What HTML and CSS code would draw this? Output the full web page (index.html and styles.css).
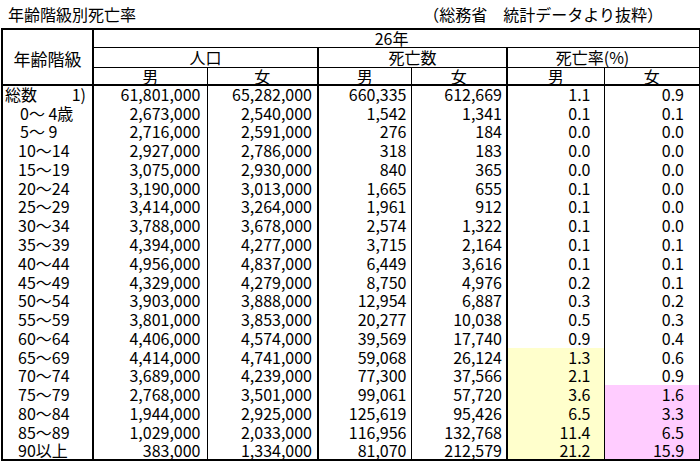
FILE: index.html
```html
<!DOCTYPE html>
<html lang="ja">
<head>
<meta charset="utf-8">
<title>年齢階級別死亡率</title>
<link rel="stylesheet" href="styles.css">
</head>
<body>
<div class="page">
  <div class="titlebar">
    <h1 class="title">年齢階級別死亡率</h1>
    <span class="source">（総務省　統計データより抜粋）</span>
  </div>
  <table class="stats">
    <colgroup>
      <col class="c-age"><col class="c-pm"><col class="c-pf"><col class="c-dm"><col class="c-df"><col class="c-rm"><col class="c-rf">
    </colgroup>
    <thead>
      <tr class="h1">
        <th rowspan="3" class="age-head">年齢階級</th>
        <th colspan="6" class="year gl">26年</th>
      </tr>
      <tr class="h2">
        <th colspan="2" class="gl">人口</th>
        <th colspan="2" class="gl">死亡数</th>
        <th colspan="2" class="gl rate-head">死亡率(%)</th>
      </tr>
      <tr class="h3">
        <th class="gl">男</th><th class="il">女</th>
        <th class="gl">男</th><th class="il">女</th>
        <th class="gl">男</th><th class="il">女</th>
      </tr>
    </thead>
    <tbody>
      <tr><th class="age"><div class="age-in"><span>総数</span><span class="note">1)</span></div></th><td class="gl pm">61,801,000</td><td class="il pf">65,282,000</td><td class="gl dm">660,335</td><td class="il df">612,669</td><td class="gl rm">1.1</td><td class="il rf">0.9</td></tr>
      <tr><th class="age one">0～ 4歳</th><td class="gl pm">2,673,000</td><td class="il pf">2,540,000</td><td class="gl dm">1,542</td><td class="il df">1,341</td><td class="gl rm">0.1</td><td class="il rf">0.1</td></tr>
      <tr><th class="age one">5～ 9</th><td class="gl pm">2,716,000</td><td class="il pf">2,591,000</td><td class="gl dm">276</td><td class="il df">184</td><td class="gl rm">0.0</td><td class="il rf">0.0</td></tr>
      <tr><th class="age">10～14</th><td class="gl pm">2,927,000</td><td class="il pf">2,786,000</td><td class="gl dm">318</td><td class="il df">183</td><td class="gl rm">0.0</td><td class="il rf">0.0</td></tr>
      <tr><th class="age">15～19</th><td class="gl pm">3,075,000</td><td class="il pf">2,930,000</td><td class="gl dm">840</td><td class="il df">365</td><td class="gl rm">0.0</td><td class="il rf">0.0</td></tr>
      <tr><th class="age">20～24</th><td class="gl pm">3,190,000</td><td class="il pf">3,013,000</td><td class="gl dm">1,665</td><td class="il df">655</td><td class="gl rm">0.1</td><td class="il rf">0.0</td></tr>
      <tr><th class="age">25～29</th><td class="gl pm">3,414,000</td><td class="il pf">3,264,000</td><td class="gl dm">1,961</td><td class="il df">912</td><td class="gl rm">0.1</td><td class="il rf">0.0</td></tr>
      <tr><th class="age">30～34</th><td class="gl pm">3,788,000</td><td class="il pf">3,678,000</td><td class="gl dm">2,574</td><td class="il df">1,322</td><td class="gl rm">0.1</td><td class="il rf">0.0</td></tr>
      <tr><th class="age">35～39</th><td class="gl pm">4,394,000</td><td class="il pf">4,277,000</td><td class="gl dm">3,715</td><td class="il df">2,164</td><td class="gl rm">0.1</td><td class="il rf">0.1</td></tr>
      <tr><th class="age">40～44</th><td class="gl pm">4,956,000</td><td class="il pf">4,837,000</td><td class="gl dm">6,449</td><td class="il df">3,616</td><td class="gl rm">0.1</td><td class="il rf">0.1</td></tr>
      <tr><th class="age">45～49</th><td class="gl pm">4,329,000</td><td class="il pf">4,279,000</td><td class="gl dm">8,750</td><td class="il df">4,976</td><td class="gl rm">0.2</td><td class="il rf">0.1</td></tr>
      <tr><th class="age">50～54</th><td class="gl pm">3,903,000</td><td class="il pf">3,888,000</td><td class="gl dm">12,954</td><td class="il df">6,887</td><td class="gl rm">0.3</td><td class="il rf">0.2</td></tr>
      <tr><th class="age">55～59</th><td class="gl pm">3,801,000</td><td class="il pf">3,853,000</td><td class="gl dm">20,277</td><td class="il df">10,038</td><td class="gl rm">0.5</td><td class="il rf">0.3</td></tr>
      <tr><th class="age">60～64</th><td class="gl pm">4,406,000</td><td class="il pf">4,574,000</td><td class="gl dm">39,569</td><td class="il df">17,740</td><td class="gl rm">0.9</td><td class="il rf">0.4</td></tr>
      <tr><th class="age">65～69</th><td class="gl pm">4,414,000</td><td class="il pf">4,741,000</td><td class="gl dm">59,068</td><td class="il df">26,124</td><td class="gl rm hl-y">1.3</td><td class="il rf">0.6</td></tr>
      <tr><th class="age">70～74</th><td class="gl pm">3,689,000</td><td class="il pf">4,239,000</td><td class="gl dm">77,300</td><td class="il df">37,566</td><td class="gl rm hl-y">2.1</td><td class="il rf">0.9</td></tr>
      <tr><th class="age">75～79</th><td class="gl pm">2,768,000</td><td class="il pf">3,501,000</td><td class="gl dm">99,061</td><td class="il df">57,720</td><td class="gl rm hl-y">3.6</td><td class="il rf hl-p">1.6</td></tr>
      <tr><th class="age">80～84</th><td class="gl pm">1,944,000</td><td class="il pf">2,925,000</td><td class="gl dm">125,619</td><td class="il df">95,426</td><td class="gl rm hl-y">6.5</td><td class="il rf hl-p">3.3</td></tr>
      <tr><th class="age">85～89</th><td class="gl pm">1,029,000</td><td class="il pf">2,033,000</td><td class="gl dm">116,956</td><td class="il df">132,768</td><td class="gl rm hl-y">11.4</td><td class="il rf hl-p">6.5</td></tr>
      <tr><th class="age">90以上</th><td class="gl pm">383,000</td><td class="il pf">1,334,000</td><td class="gl dm">81,070</td><td class="il df">212,579</td><td class="gl rm hl-y">21.2</td><td class="il rf hl-p">15.9</td></tr>
    </tbody>
  </table>
</div>
</body>
</html>
```

FILE: styles.css
```css
html, body {
  margin: 0;
  padding: 0;
  background: #ffffff;
}

body {
  font-family: "Noto Sans CJK JP", "Noto Sans", sans-serif;
  color: #000000;
}

.page {
  width: 698px;
  padding: 0 1px;
}

.titlebar {
  display: flex;
  align-items: center;
  justify-content: space-between;
  height: 28px;
  padding: 0 36px 0 7px;
}

.title {
  margin: 0;
  font-size: 16px;
  font-weight: normal;
  line-height: 20px;
}

.source {
  font-size: 16px;
  line-height: 20px;
}

.stats {
  width: 698px;
  table-layout: fixed;
  border-collapse: collapse;
  border: 2px solid #000000;
  font-size: 16px;
  line-height: 18px;
}

.c-age { width: 91px; }
.c-pm { width: 114px; }
.c-pf { width: 111px; }
.c-dm { width: 93px; }
.c-df { width: 96px; }
.c-rm { width: 97px; }
.c-rf { width: 96px; }

.stats th,
.stats td {
  padding: 0;
  font-weight: normal;
  white-space: nowrap;
}

.stats thead th {
  text-align: center;
  border-top: 1px solid #000000;
  line-height: 16px;
}

.h1 { height: 18px; }
.h2 { height: 20px; }
.h3 { height: 18px; }

.h3 th {
  border-bottom: 2px solid #000000;
}

.age-head {
  border-bottom: 2px solid #000000;
  border-right: 2px solid #000000;
  font-size: 17px;
  padding-top: 4px !important;
}

.year {
  padding-right: 10px !important;
}

.rate-head {
  padding-right: 22px !important;
}

.gl { border-left: 2px solid #000000; }
.il { border-left: 1px solid #000000; }

.stats tbody tr { height: 18.77px; }

.stats tbody th,
.stats tbody td {
  line-height: 17px;
}

.age {
  text-align: left;
  padding-left: 15px !important;
  border-right: 2px solid #000000;
}

.age.one {
  padding-left: 17px !important;
}

.age-in {
  display: flex;
  justify-content: space-between;
  margin-left: -13px;
  padding-right: 6px;
}

.stats td {
  text-align: right;
}

.pm { padding-right: 6px !important; }
.pf { padding-right: 5px !important; }
.dm { padding-right: 4px !important; }
.df { padding-right: 4px !important; }
.rm { padding-right: 13px !important; }
.rf { padding-right: 15px !important; }

.hl-y { background: #ffffcc; }
.hl-p { background: #ffccff; }
```
